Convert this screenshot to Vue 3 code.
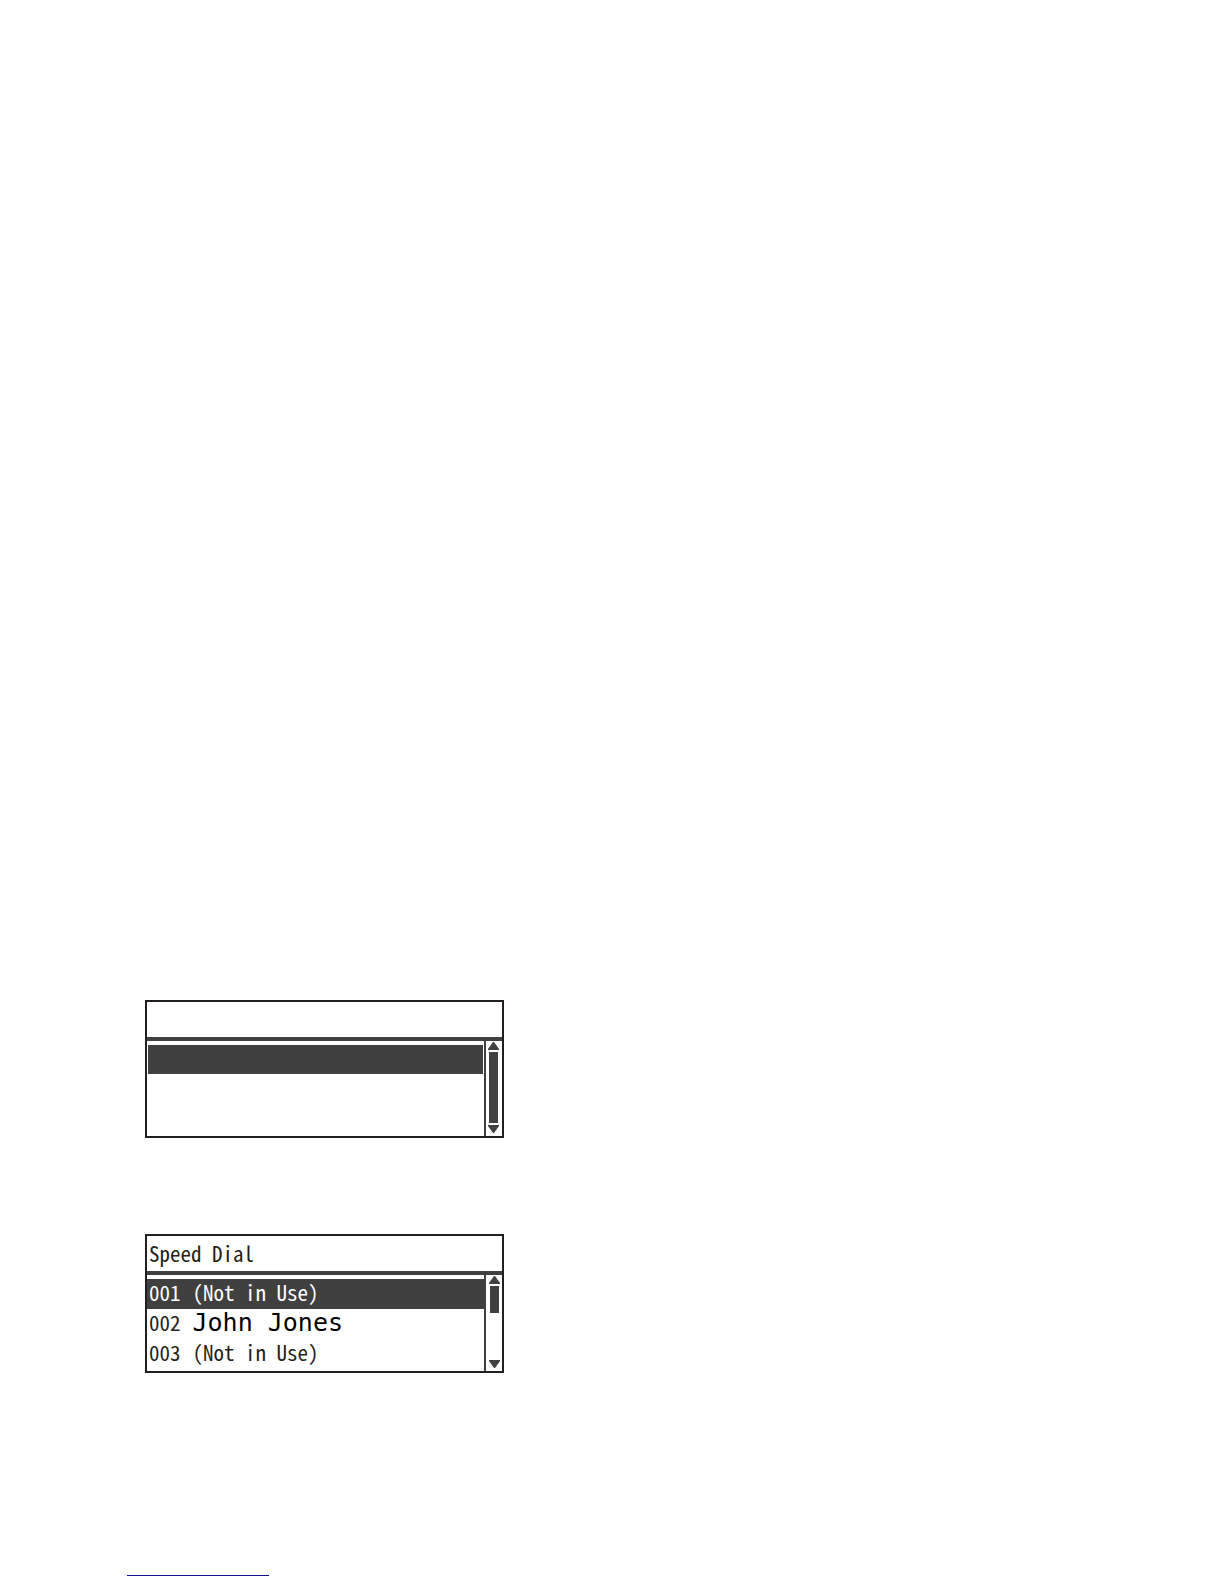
<template>
    <main class="page">
        <section class="screen" v-for="screen in screens" :key="screen.id" :class="screen.id" :aria-label="screen.label">
            <h2 class="title">{{ screen.title }}</h2>
            <div class="content">
                <ul class="rows">
                    <li v-for="(row, index) in screen.rows" :key="index">
                        <button class="row" :class="{ selected: screen.selected === index }" :aria-label="row.number ? null : 'Empty entry'" @click="selectRow(screen, index)">
                            <span>{{ row.number }}</span>
                            <span :class="{ custom: row.custom }">{{ row.name }}</span>
                        </button>
                    </li>
                </ul>
                <div class="scrollbar">
                    <button class="arrow" aria-label="Scroll up" @click="moveRow(screen, -1)">
                        <svg viewBox="0 0 11 8"><path d="M5 0h1l5 7v1H0V7z" /></svg>
                    </button>
                    <div class="track">
                        <div class="thumb" :style="{ height: screen.thumb + '%' }"></div>
                    </div>
                    <button class="arrow" aria-label="Scroll down" @click="moveRow(screen, 1)">
                        <svg viewBox="0 0 11 8"><path d="M0 0h11v1L6 8H5L0 1z" /></svg>
                    </button>
                </div>
            </div>
        </section>
        <a class="footer-link" href="#" aria-label="Contents"></a>
    </main>
</template>

<script setup>

import { reactive } from 'vue'

const screens = reactive([
    {
        id: 'blank',
        label: 'Menu',
        title: '',
        selected: 0,
        thumb: 100,
        rows: [{}, {}, {}]
    },
    {
        id: 'speed-dial',
        label: 'Speed Dial',
        title: 'Speed Dial',
        selected: 0,
        thumb: 37,
        rows: [
            { number: '001', name: '(Not in Use)' },
            { number: '002', name: 'John Jones', custom: true },
            { number: '003', name: '(Not in Use)' }
        ]
    }
])

const selectRow = (screen, index) => {
    screen.selected = index
}

const moveRow = (screen, step) => {
    const next = screen.selected + step
    if (next >= 0 && next < screen.rows.length) {
        screen.selected = next
    }
}

</script>

<style>
body {
    margin: 0;
    background: #fff;
}
</style>

<style scoped>
* {
    box-sizing: border-box;
}

.page {
    display: flex;
    flex-direction: column;
    gap: 96px;
    padding: 1000px 145px 8px;
    font-family: "Noto Sans Mono CJK JP", "Noto Sans CJK JP", sans-serif;
    font-feature-settings: "hwid";
    font-size: 21px;
    line-height: 30px;
    color: #231f20;
}

.screen {
    width: 100%;
    max-width: 359px;
    border: 2px solid #231f20;
}

.title {
    min-height: 39px;
    margin: 0;
    padding: 2px;
    border-bottom: 4px solid #404041;
    font-size: 21px;
    font-weight: 400;
}

.content {
    display: flex;
}

.rows {
    flex: 1;
    margin: 0;
    padding: 4px 1px 0;
    list-style: none;
}

.speed-dial .rows {
    padding: 4px 0 2px;
}

.row {
    display: flex;
    align-items: baseline;
    gap: 12px;
    width: 100%;
    height: 30px;
    padding: 0 2px;
    border: 0;
    background: none;
    color: inherit;
    font: inherit;
    font-feature-settings: inherit;
    line-height: 26px;
    text-align: left;
    white-space: nowrap;
    cursor: pointer;
}

.blank .row {
    height: 29px;
}

.selected {
    background: #404041;
    color: #fff;
}

.custom {
    font-family: "DejaVu Sans Mono", monospace;
    font-size: 25px;
    color: #000;
}

.selected .custom {
    color: #fff;
}

.scrollbar {
    display: flex;
    flex-direction: column;
    align-items: center;
    gap: 2px;
    width: 18px;
    padding: 1px 2px 3px;
    border-left: 2px solid #404041;
}

.blank .scrollbar {
    min-height: 95px;
    padding-right: 3px;
}

.arrow {
    display: flex;
    padding: 0;
    border: 0;
    background: none;
    cursor: pointer;
}

.arrow svg {
    width: 11px;
    height: 8px;
    fill: #404041;
}

.track {
    flex: 1;
    width: 9px;
}

.thumb {
    background: #404041;
}

.footer-link {
    width: 142px;
    height: 107px;
    margin-left: -18px;
    border-bottom: 1px solid #10108c;
}
</style>
